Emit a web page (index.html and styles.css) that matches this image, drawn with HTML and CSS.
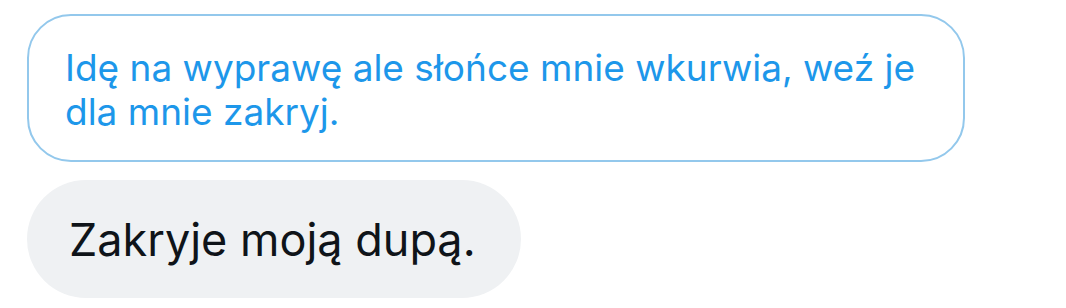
FILE: index.html
```html
<!DOCTYPE html>
<html lang="pl">
<head>
  <meta charset="UTF-8">
  <meta name="viewport" content="width=device-width, initial-scale=1.0">
  <title>Wiadomości</title>
  <link rel="stylesheet" href="styles.css">
</head>
<body>
  <div class="chat">
    <div class="bubble quoted">
      Idę na wyprawę ale słońce mnie wkurwia, weź je dla mnie zakryj.
    </div>
    <div class="bubble reply">Zakryje moją dupą.</div>
  </div>
</body>
</html>
```

FILE: styles.css
```css
body {
  background-color: #fff;
  font-family: Inter, 'Noto Sans', sans-serif;
  margin: 0;
  padding: 0;
}
.chat {
  display: flex;
  flex-direction: column;
  align-items: flex-start;
  gap: 18px;
  padding: 14px 0 0 27px;
}
.bubble {
  box-sizing: border-box;
}
.quoted {
  width: 938px;
  height: 148px;
  padding: 30px 40px 0 36px;
  border: 2px solid #93c8ec;
  border-radius: 44px;
  color: #1d97ea;
  font-size: 37px;
  line-height: 44px;
}
.reply {
  height: 118px;
  padding: 0 45px 0 42px;
  display: flex;
  align-items: center;
  background-color: #eff1f3;
  border-radius: 59px;
  color: #0f1419;
  font-size: 45px;
}
```
